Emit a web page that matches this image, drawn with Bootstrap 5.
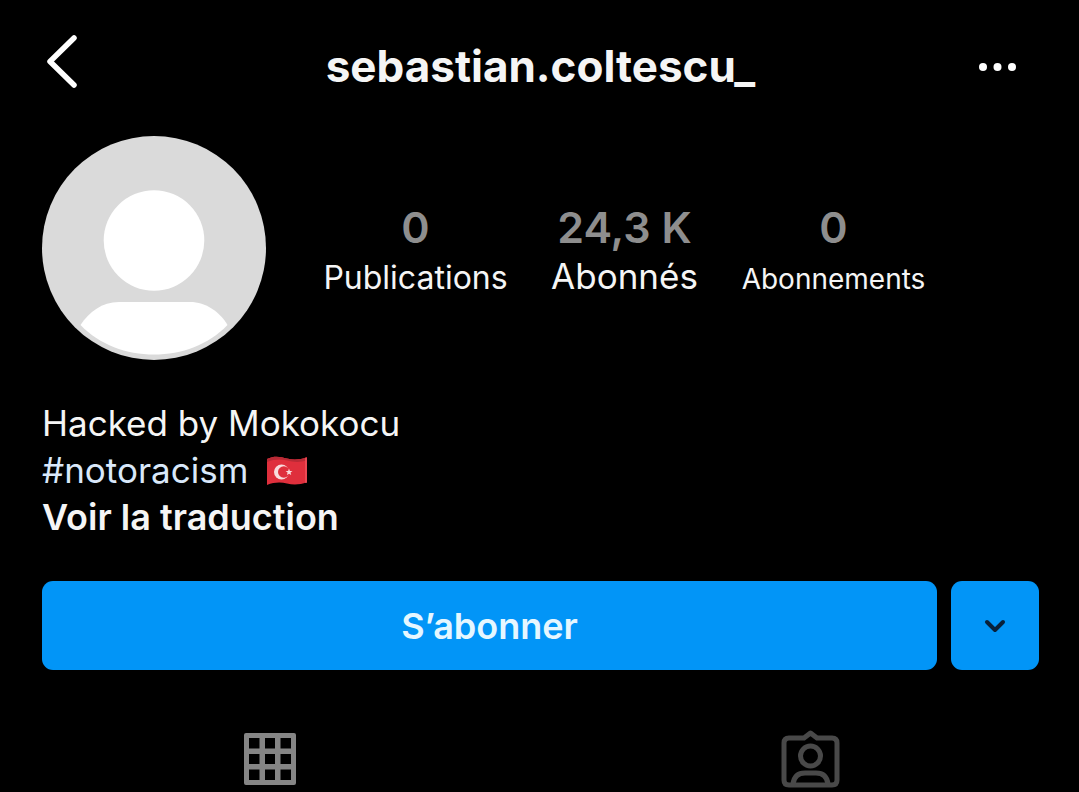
<!DOCTYPE html>
<html lang="fr">
<head>
<meta charset="utf-8">
<meta name="viewport" content="width=device-width, initial-scale=1">
<title>sebastian.coltescu_</title>
<link href="https://cdn.jsdelivr.net/npm/bootstrap@5.3.0/dist/css/bootstrap.min.css" rel="stylesheet">
<style>
  body { background: #000; color: #f5f5f5; font-family: Inter, "Liberation Sans", sans-serif; overflow-x: hidden; }
  .gutter { padding-left: 42px; padding-right: 40px; }
  .topbar { height: 136px; padding-bottom: 4px; }
  .icon-btn { width: 60px; height: 60px; padding: 0; border: 0; }
  .icon-btn svg, .tab-link svg, .avatar, .flag { display: block; overflow: visible; }
  .username { font-size: 44px; line-height: 52px; font-weight: 700; }
  .avatar { width: 224px; height: 224px; }
  .stats { margin-left: 45px; margin-right: 101px; padding-top: 6px; }
  .stat-value { color: #8e8e8e; font-size: 43px; line-height: 52px; font-weight: 600; }
  .stat-label { font-size: 35px; line-height: 46px; }
  .size-md { font-size: 32px; }
  .size-sm { font-size: 28px; }
  .bio { margin-top: 40px; font-size: 35px; line-height: 47px; }
  .bio a { color: #f5f5f5; }
  .bio .hashtag { color: #d9e8fa; }
  .bio .translate-link { font-size: 36px; }
  .hashtag-line { gap: 18px; }
  .actions { margin-top: 40px; gap: 14px; }
  .btn-follow { height: 89px; border: 0; border-radius: 11px; background: #0295f7; color: #e6f7ff; font-size: 36px; font-weight: 600; }
  .btn-follow:hover { background: #0a84e0; color: #fff; }
  .btn-more { width: 88px; }
  .tabs { margin-top: 60px; }
</style>
</head>
<body>
<header class="topbar gutter d-flex align-items-center justify-content-between">
  <button type="button" class="btn icon-btn" aria-label="Retour">
    <svg width="60" height="60" viewBox="0 0 60 60" fill="none" stroke="#fff" stroke-width="5.500" stroke-linecap="round" stroke-linejoin="round"><path d="M32 2 8 25.500 32 49"/></svg>
  </button>
  <h1 class="username mb-0">sebastian.coltescu_</h1>
  <button type="button" class="btn icon-btn" aria-label="Options">
    <svg width="60" height="60" viewBox="0 0 60 60" fill="#fff"><circle cx="4" cy="31" r="4"/><circle cx="18.500" cy="31" r="4"/><circle cx="33" cy="31" r="4"/></svg>
  </button>
</header>

<main>
  <section class="gutter d-flex align-items-center">
    <svg class="avatar flex-shrink-0" viewBox="0 0 224 224" role="img" aria-label="Photo de profil">
      <circle cx="112" cy="112" r="112" fill="#dadada"/>
      <circle cx="112" cy="104.500" r="50.300" fill="#fff"/>
      <path d="M38.500 189C47 176 60 166 77 166H148C164 166 178 176 185.500 189C166 209 140 218.500 112 218.500S58 209 38.500 189Z" fill="#fff"/>
    </svg>
    <div class="stats row g-0 flex-grow-1 text-center text-nowrap">
      <div class="col-4"><div class="stat-value">0</div><div class="stat-label"><span class="size-md">Publications</span></div></div>
      <div class="col-4"><div class="stat-value">24,3 K</div><div class="stat-label">Abonnés</div></div>
      <div class="col-4"><div class="stat-value">0</div><div class="stat-label"><span class="size-sm">Abonnements</span></div></div>
    </div>
  </section>

  <section class="bio gutter">
    <div>Hacked by Mokokocu</div>
    <div class="hashtag-line d-flex align-items-center">
      <a href="#" class="hashtag text-decoration-none">#notoracism</a>
      <svg class="flag" width="42" height="30" viewBox="0 0 42 30" role="img" aria-label="Drapeau de la Turquie">
        <path d="M1 3C9-1 15 1 21 2.500S34 4 41 1V26C34 29 27 29 21 27.500S8 26 1 29Z" fill="#df2f3c"/>
        <path d="M1 3C9-1 15 1 21 2.500S34 4 41 1V4C34 7 27 6 21 4.500S9 3 1 6Z" fill="#b92a35"/>
        <path d="M40 2V27" stroke="#f0525c" stroke-width="1.500"/>
        <circle cx="15.500" cy="16" r="7.500" fill="#f8dcdc"/><circle cx="17.800" cy="16" r="5.800" fill="#df2f3c"/>
        <path d="m23 12.500.9 2.400 2.600.1-2 1.600.7 2.500-2.200-1.400-2.100 1.400.7-2.500-2-1.600 2.500-.1Z" fill="#f8dcdc"/>
      </svg>
    </div>
    <div><a href="#" class="translate-link text-decoration-none fw-semibold">Voir la traduction</a></div>
  </section>

  <section class="actions gutter d-flex">
    <button type="button" class="btn btn-follow flex-grow-1">S’abonner</button>
    <button type="button" class="btn btn-follow btn-more d-flex align-items-center justify-content-center p-0" aria-label="Suggestions">
      <svg width="22" height="14" viewBox="0 0 22 14" fill="none" stroke="#08203a" stroke-width="4" stroke-linecap="round" stroke-linejoin="round"><path d="m3 3 8 8 8-8"/></svg>
    </button>
  </section>

  <nav class="tabs row g-0" aria-label="Contenu du profil">
    <a href="#" class="tab-link col-6 d-flex justify-content-center" aria-label="Publications">
      <svg width="58" height="58" viewBox="0 0 58 58"><path fill="#858585" fill-rule="evenodd" d="M5 3H53Q55 3 55 5V53Q55 55 53 55H5Q3 55 3 53V5Q3 3 5 3ZM8 8V18.500H18.500V8ZM24 8V18.500H34V8ZM39.500 8V18.500H50V8ZM8 24V34H18.500V24ZM24 24V34H34V24ZM39.500 24V34H50V24ZM8 39.500V50H18.500V39.500ZM24 39.500V50H34V39.500ZM39.500 39.500V50H50V39.500Z"/></svg>
    </a>
    <a href="#" class="tab-link col-6 d-flex justify-content-center" aria-label="Identifications">
      <svg width="62" height="58" viewBox="-2 0 62 58" fill="none" stroke="#494949" stroke-width="5" stroke-linejoin="round" stroke-linecap="round"><path d="M9 8H24L30.500 3 37 8H52Q57 8 57 13V50Q57 55 52 55H9Q4 55 4 50V13Q4 8 9 8Z"/><circle cx="30.500" cy="26" r="10"/><path d="M13 54C14 46 19 43 25 43H36C42 43 47 46 48 54"/></svg>
    </a>
  </nav>
</main>
<script src="https://cdn.jsdelivr.net/npm/bootstrap@5.3.0/dist/js/bootstrap.bundle.min.js"></script>
</body>
</html>
